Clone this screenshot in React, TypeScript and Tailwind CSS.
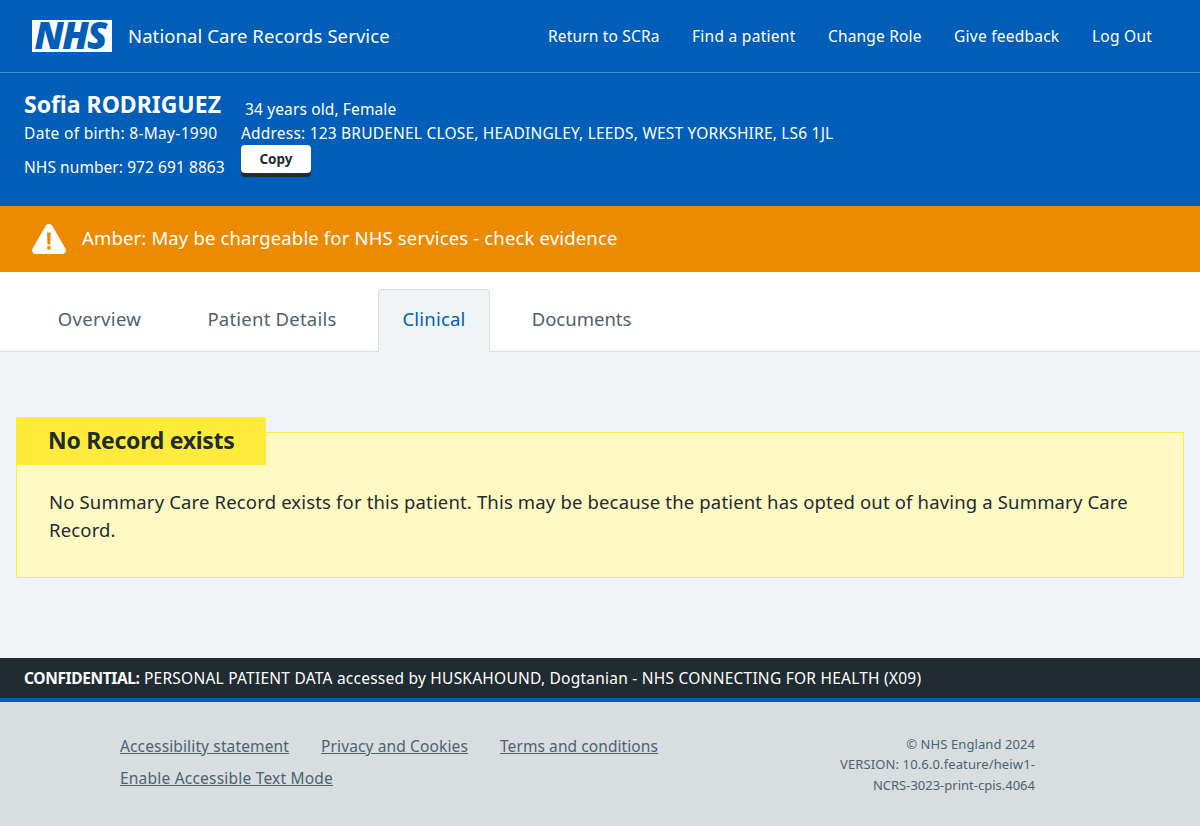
import React from "react";

function NhsLogo() {
  return (
    <svg width="80" height="32" viewBox="0 0 80 32" role="img" aria-label="NHS" className="block shrink-0 overflow-visible">
      <rect width="80" height="32" fill="#ffffff" />
      <text
        x="2.4"
        y="29"
        textLength="71.5"
        lengthAdjust="spacingAndGlyphs"
        letterSpacing="-1.6"
        fill="#005eb8"
        fontFamily="'Noto Sans', 'Open Sans', sans-serif"
        fontSize="36.5"
        fontWeight="900"
        fontStyle="italic"
      >
        NHS
      </text>
    </svg>
  );
}

function WarningIcon() {
  return (
    <svg width="34" height="30" viewBox="0 0 34 30" className="block shrink-0" aria-hidden="true">
      <path
        d="M13.4 2.2C14.9-.7 19.1-.7 20.6 2.2L33.4 24.4C34.9 27.2 33 30 30.2 30H3.8C1 30-.9 27.2.6 24.4Z"
        fill="#ffffff"
      />
      <path d="M15 8.6h3.8l-.5 12h-2.8zM15.2 22.3h3.4v3.1h-3.4z" fill="#ed8b00" />
    </svg>
  );
}

export default function App() {
  return (
    <div className="flex h-[826px] w-[1200px] flex-col overflow-hidden bg-[#f0f4f5] font-['Noto_Sans','Open_Sans',sans-serif] text-[15.5px] whitespace-nowrap text-[#212b32]">
      <header className="flex h-[73px] shrink-0 items-center border-b border-white/30 bg-[#005eb8] pl-8 text-white">
        <NhsLogo />
        <span className="ml-4 text-[18.5px] leading-7 tracking-[0.09px]">National Care Records Service</span>
        <nav className="ml-auto flex gap-8 pr-12 leading-6">
          <a className="w-[112px] tracking-[0.18px]">Return to SCRa</a>
          <a className="w-[104px] tracking-[0.28px]">Find a patient</a>
          <a className="w-[94px] tracking-[0.18px]">Change Role</a>
          <a className="w-[106px] tracking-[0.24px]">Give feedback</a>
          <a className="w-[60px] tracking-[0.25px]">Log Out</a>
        </nav>
      </header>

      <section className="grid h-[133px] shrink-0 grid-cols-[217px_auto] grid-rows-[48px_24px_61px] bg-[#005eb8] pl-6 leading-6 text-white">
        <h1 className="pt-[15px] text-[23px] leading-8 font-bold">Sofia RODRIGUEZ</h1>
        <p className="pt-6 pl-1 tracking-[0.13px]">34 years old, Female</p>
        <p className="tracking-[0.32px]">Date of birth: 8-May-1990</p>
        <p className="tracking-[0.2px]">Address: 123 BRUDENEL CLOSE, HEADINGLEY, LEEDS, WEST YORKSHIRE, LS6 1JL</p>
        <p className="pt-[10px] tracking-[0.07px]">NHS number: 972 691 8863</p>
        <button className="h-7 w-[70px] rounded bg-white text-[13.5px] leading-7 font-bold text-[#212b32] shadow-[0_4px_0_#212b32]">
          Copy
        </button>
      </section>

      <section className="flex h-[66px] shrink-0 items-center bg-[#ed8b00] pl-8 text-white">
        <WarningIcon />
        <p className="ml-4 pb-0.5 text-[18.5px] leading-7 tracking-[0.15px]">
          Amber: May be chargeable for NHS services - check evidence
        </p>
      </section>

      <nav className="flex h-20 shrink-0 items-end gap-4 bg-white pl-[33px] text-center text-[18.5px] leading-7 text-[#4c6272] shadow-[inset_0_-1px_0_#d8dde0]">
        <a className="h-[63px] w-[133px] pt-4 tracking-[0.34px]">Overview</a>
        <a className="ml-px h-[63px] w-[178px] pt-4 tracking-[0.22px]">Patient Details</a>
        <a className="ml-px h-[63px] w-[112px] rounded-t border border-b-0 border-[#d8dde0] bg-[#f0f4f5] pt-[15px] tracking-[0.2px] text-[#005eb8]">
          Clinical
        </a>
        <a className="h-[63px] w-[151px] pt-4">Documents</a>
      </nav>

      <main className="flex-1 px-4 pt-[65px]">
        <h2 className="relative z-10 -mb-[33px] h-12 w-[250px] bg-[#ffeb3b] pt-[7px] pl-8 text-[23px] leading-8 font-bold tracking-[-0.28px]">
          No Record exists
        </h2>
        <div className="h-[146px] border border-[#ffeb3b] bg-[#fff9c4] pt-[55px] pl-8 text-[18.5px] leading-7 tracking-[0.155px]">
          <p>
            No Summary Care Record exists for this patient. This may be because the patient has opted out of having a
            Summary Care
            <br />
            Record.
          </p>
        </div>
      </main>

      <div className="h-10 shrink-0 bg-[#212b32] pl-6 leading-10 text-white">
        <strong className="inline-block w-[116px] font-bold tracking-[-0.37px]">CONFIDENTIAL:</strong>
        <span className="ml-1 tracking-[0.235px]">
          PERSONAL PATIENT DATA accessed by HUSKAHOUND, Dogtanian - NHS CONNECTING FOR HEALTH (X09)
        </span>
      </div>

      <footer className="flex h-32 shrink-0 justify-between border-t-4 border-[#005eb8] bg-[#d8dde0] pr-[165px] pl-[120px] text-[#4c6272]">
        <ul className="flex w-[600px] flex-wrap content-start gap-x-8 gap-y-2 pt-8 leading-6 underline">
          <li className="w-[169px] tracking-[0.135px]">Accessibility statement</li>
          <li className="w-[147px] tracking-[0.13px]">Privacy and Cookies</li>
          <li className="w-[158px] tracking-[0.08px]">Terms and conditions</li>
          <li className="tracking-[0.21px]">Enable Accessible Text Mode</li>
        </ul>
        <p className="pt-8 text-right text-[13px] leading-[20.3px]">
          <span className="tracking-[0.08px]">© NHS England 2024</span>
          <br />
          <span className="tracking-[0.12px]">VERSION: 10.6.0.feature/heiw1-</span>
          <br />
          <span>NCRS-3023-print-cpis.4064</span>
        </p>
      </footer>
    </div>
  );
}
